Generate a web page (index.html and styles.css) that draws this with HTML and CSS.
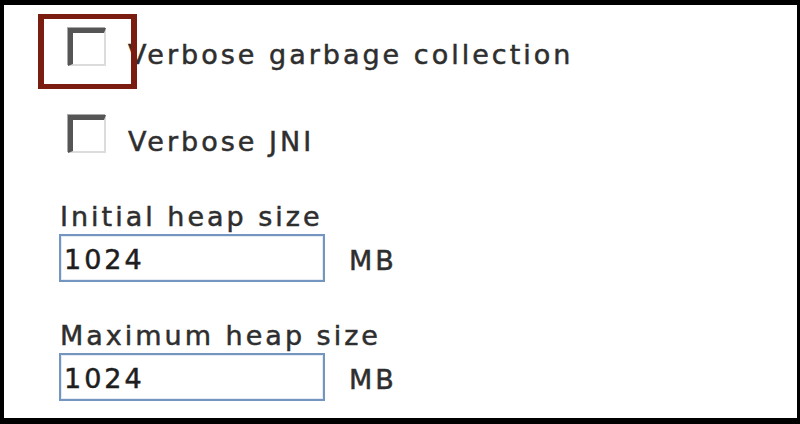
FILE: index.html
```html
<!DOCTYPE html>
<html>
<head>
<meta charset="utf-8">
<link rel="stylesheet" href="styles.css">
</head>
<body>
<div class="panel">
  <div class="check-row row-first">
    <span class="highlight"></span>
    <span class="checkbox"></span>
    <span class="label">Verbose garbage collection</span>
  </div>
  <div class="check-row row-second">
    <span class="checkbox"></span>
    <span class="label">Verbose JNI</span>
  </div>
  <div class="field">
    <div class="field-label">Initial heap size</div>
    <div class="field-line">
      <div class="input">1024</div>
      <span class="unit">MB</span>
    </div>
  </div>
  <div class="field field-second">
    <div class="field-label">Maximum heap size</div>
    <div class="field-line">
      <div class="input">1024</div>
      <span class="unit">MB</span>
    </div>
  </div>
</div>
</body>
</html>
```

FILE: styles.css
```css
html, body {
  margin: 0;
  padding: 0;
  background: #000;
}
body {
  padding: 5px 3px 6px 4px;
  height: 424px;
  box-sizing: border-box;
}
.panel {
  background: #fff;
  height: 413px;
  padding-top: 23px;
  box-sizing: border-box;
  font-family: "DejaVu Sans", Verdana, sans-serif;
  font-size: 27px;
  letter-spacing: 3px;
  color: #2e2e2e;
  -webkit-text-stroke: 0.5px #2e2e2e;
  overflow: hidden;
}
.check-row {
  position: relative;
  display: flex;
  align-items: flex-start;
  padding-left: 64px;
}
.row-first {
  height: 87px;
}
.row-second {
  height: 86px;
}
.checkbox {
  flex: none;
  width: 38px;
  height: 38px;
  box-sizing: border-box;
  border-style: solid;
  border-width: 5px 2px 2px 5px;
  border-color: #555 #dcdcdc #dcdcdc #555;
  box-shadow: -1px -1px 0 #aaa;
  background: #fff;
}
.label {
  margin-left: 22px;
  margin-top: 11px;
  line-height: 32px;
  white-space: nowrap;
}
.highlight {
  position: absolute;
  left: 34px;
  top: -14px;
  width: 99px;
  height: 75px;
  box-sizing: border-box;
  border-style: solid;
  border-color: #7a1c10;
  border-width: 5px 6px 5px 6px;
}
.field {
  padding-left: 56px;
}
.field-second {
  margin-top: 38px;
}
.field-label {
  line-height: 32px;
  white-space: nowrap;
}
.field-line {
  display: flex;
  align-items: center;
  margin-top: 1px;
}
.input {
  width: 266px;
  height: 48px;
  box-sizing: border-box;
  border: 2px solid #7495c0;
  box-shadow: inset 0 0 0 1px #e4ebf3;
  padding: 4px 0 0 3px;
  line-height: 40px;
  color: #1e1e1e;
  -webkit-text-stroke: 0.5px #1e1e1e;
  margin-left: -1px;
}
.unit {
  margin-left: 24px;
  padding-top: 4px;
}
```
